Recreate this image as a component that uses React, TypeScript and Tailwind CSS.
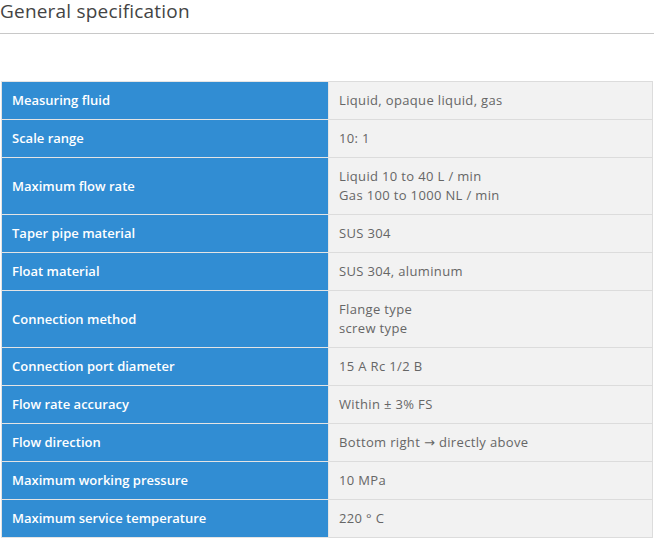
const rows: [string, React.ReactNode[]][] = [
  ['Measuring fluid', ['Liquid, opaque liquid, gas']],
  ['Scale range', ['10: 1']],
  ['Maximum flow rate', ['Liquid 10 to 40 L / min', 'Gas 100 to 1000 NL / min']],
  ['Taper pipe material', ['SUS 304']],
  ['Float material', ['SUS 304, aluminum']],
  ['Connection method', ['Flange type', 'screw type']],
  ['Connection port diameter', ['15 A Rc 1/2 B']],
  ['Flow rate accuracy', ['Within ± 3% FS']],
  [
    'Flow direction',
    [
      <>
        Bottom right <span style={{ fontFamily: '"DejaVu Sans", sans-serif' }}>→</span> directly above
      </>,
    ],
  ],
  ['Maximum working pressure', ['10 MPa']],
  ['Maximum service temperature', ['220 ° C']],
]

export default function App() {
  return (
    <div className="w-[657px] h-[542px] bg-white overflow-hidden" style={{ fontFamily: '"Open Sans", "Noto Sans", sans-serif' }}>
      <div className="w-[654px]">
        {/* Heading */}
        <h2 className="text-[19px] leading-[22px] tracking-[0.2px] text-[#444] font-normal pb-[11px] border-b border-[#c8c8c8]">
          General specification
        </h2>

        {/* Spec table */}
        <table className="mt-[47px] ml-px w-[652px] border-collapse text-[13px] leading-[19px]">
          <tbody>
            {rows.map(([label, values]) => (
              <tr key={label}>
                <th className="w-[327px] bg-[#318dd3] text-white text-left font-semibold px-[10px] py-[9px] border border-[#e4e4e4]">
                  {label}
                </th>
                <td className="bg-[#f2f2f2] text-[#666] tracking-[0.35px] px-[10px] py-[9px] border border-[#dcdcdc]">
                  {values.map((v, i) => (
                    <div key={i}>{v}</div>
                  ))}
                </td>
              </tr>
            ))}
          </tbody>
        </table>
      </div>
    </div>
  )
}
